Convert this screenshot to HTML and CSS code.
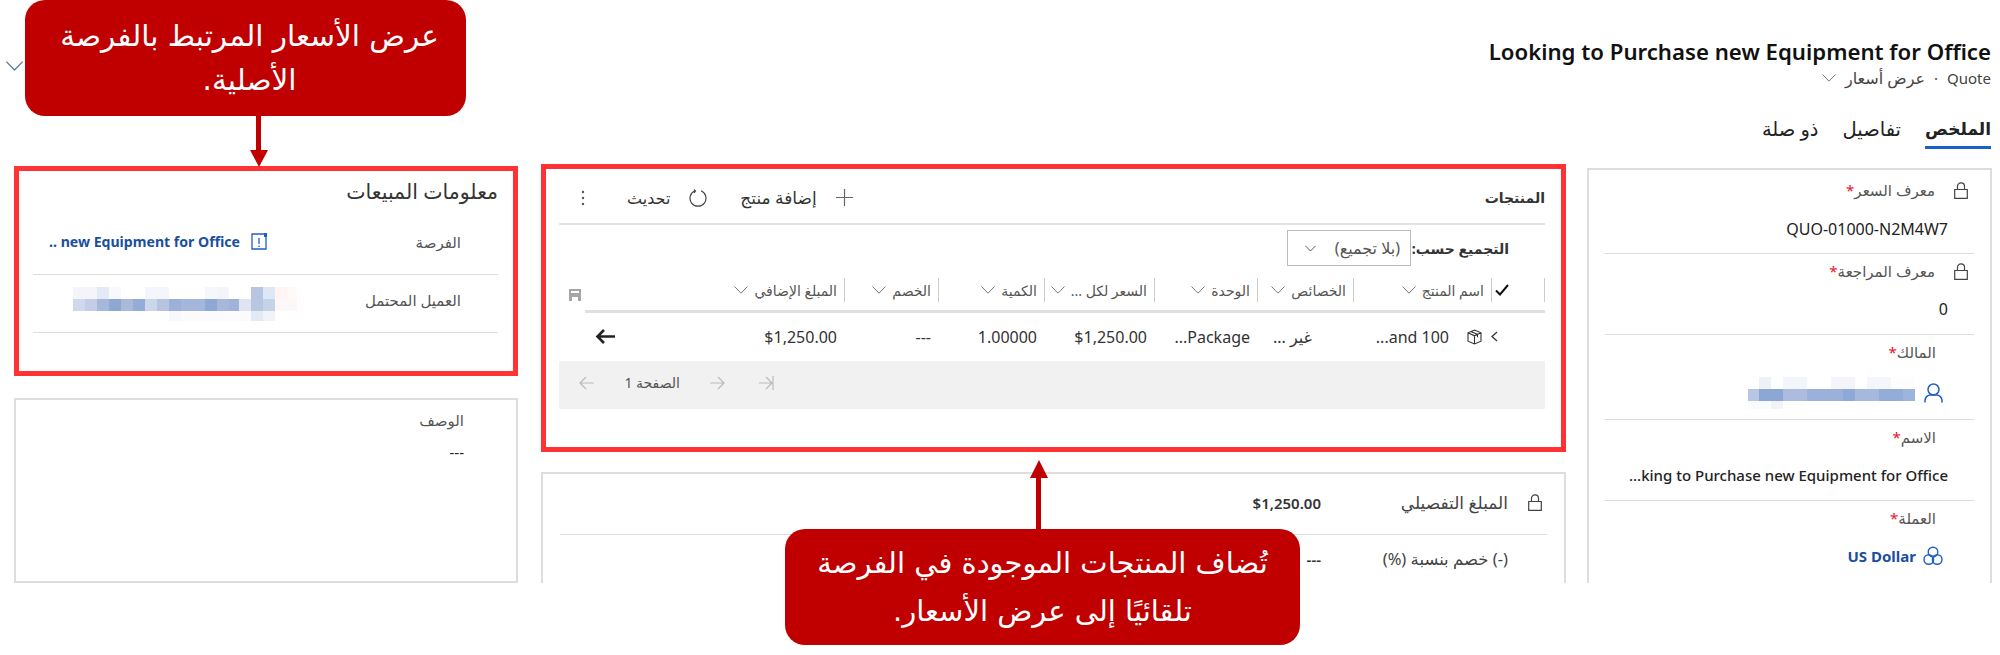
FILE: index.html
```html
<!DOCTYPE html>
<html lang="ar" dir="rtl">
<head>
  <meta charset="utf-8">
  <title>Quote</title>
  <link rel="stylesheet" href="styles.css">
</head>
<body>
  <svg width="0" height="0" class="defs">
    <symbol id="chev" viewBox="0 0 14 8"><path d="M.5.5 7 7.200 13.500.5" fill="none" stroke="currentColor"/></symbol>
    <symbol id="lock" viewBox="0 0 14 17"><path d="M.7 7.500h12.600v8.800H.7zM3.500 7.500V4.300a3.500 3.500 0 0 1 7 0v3.200" fill="none" stroke="currentColor" stroke-width="1.200"/></symbol>
  </svg>

  <div class="page">
    <button class="collapse" type="button"><svg class="ico-collapse"><use href="#chev"/></svg></button>

    <header class="head">
      <h1 class="ltr">Looking to Purchase new Equipment for Office</h1>
      <div class="sub">
        <span>Quote</span><span>·</span><span class="sub-type">عرض أسعار</span>
        <svg class="ico-chev"><use href="#chev"/></svg>
      </div>
      <nav class="tabs">
        <a class="tab active">الملخص</a>
        <a class="tab">تفاصيل</a>
        <a class="tab">ذو صلة</a>
      </nav>
    </header>

    <main class="cols">
      <!-- right column: quote fields -->
      <section class="card fields">
        <div class="field">
          <div class="label locked"><svg class="ico-lock"><use href="#lock"/></svg><span>معرف السعر<i>*</i></span></div>
          <div class="value">QUO-01000-N2M4W7</div>
        </div>
        <div class="field">
          <div class="label locked"><svg class="ico-lock"><use href="#lock"/></svg><span>معرف المراجعة<i>*</i></span></div>
          <div class="value">0</div>
        </div>
        <div class="field tall">
          <div class="label"><span>المالك<i>*</i></span></div>
          <div class="value icon-value">
            <svg class="ico-person" viewBox="0 0 19 20"><circle cx="9.500" cy="6.500" r="5.500" fill="none" stroke="#1f5fc4" stroke-width="1.500"/><path d="M1 19.500v-2c0-3 2.500-5.500 5.500-5.500h6c3 0 5.500 2.500 5.500 5.500v2" fill="none" stroke="#1f5fc4" stroke-width="1.500"/></svg>
            <span class="blur blur-owner"></span>
          </div>
        </div>
        <div class="field">
          <div class="label"><span>الاسم<i>*</i></span></div>
          <div class="value ltr name-value">...king to Purchase new Equipment for Office</div>
        </div>
        <div class="field last">
          <div class="label"><span>العملة<i>*</i></span></div>
          <div class="value icon-value link currency">
            <svg class="ico-currency" viewBox="0 0 20 20" fill="none" stroke="#1f5fc4" stroke-width="1.400"><circle cx="10" cy="6" r="4.800"/><circle cx="5.800" cy="13.500" r="4.800"/><circle cx="14.200" cy="13.500" r="4.800"/></svg>
            <span class="ltr">US Dollar</span>
          </div>
        </div>
      </section>

      <!-- middle column: products grid and totals -->
      <div class="col-mid">
        <section class="card marked products">
          <div class="toolbar">
            <span class="tb-title">المنتجات</span>
            <div class="tb-actions">
              <button class="tb-btn add" type="button">
                <svg class="ico-plus" viewBox="0 0 17 17"><path d="M8.500 0v17M0 8.500h17" stroke="#666" stroke-width="1.200"/></svg>
                <span>إضافة منتج</span>
              </button>
              <button class="tb-btn" type="button">
                <svg class="ico-refresh" viewBox="0 0 18 18" fill="none" stroke="#444" stroke-width="1.200"><path d="M6 1.800a8 8 0 1 0 6 0"/><path d="M5 .5 6.500 2 5 4"/></svg>
                <span>تحديث</span>
              </button>
              <svg class="ico-more" viewBox="0 0 4 16"><circle cx="2" cy="2" r="1.200" fill="#555"/><circle cx="2" cy="8" r="1.200" fill="#555"/><circle cx="2" cy="14" r="1.200" fill="#555"/></svg>
            </div>
          </div>

          <div class="groupby">
            <span class="gb-label">التجميع حسب:</span>
            <div class="select"><span>(بلا تجميع)</span><svg class="ico-chev dark"><use href="#chev"/></svg></div>
          </div>

          <div class="grid grid-head">
            <div class="th th-check"><svg class="ico-check" viewBox="0 0 14 12"><path d="M1 6.500 5 10.500 13 1" fill="none" stroke="#111" stroke-width="2"/></svg></div>
            <div class="th">اسم المنتج<svg class="ico-chev"><use href="#chev"/></svg></div>
            <div class="th">الخصائص<svg class="ico-chev"><use href="#chev"/></svg></div>
            <div class="th">الوحدة<svg class="ico-chev"><use href="#chev"/></svg></div>
            <div class="th">السعر لكل ...<svg class="ico-chev"><use href="#chev"/></svg></div>
            <div class="th">الكمية<svg class="ico-chev"><use href="#chev"/></svg></div>
            <div class="th">الخصم<svg class="ico-chev"><use href="#chev"/></svg></div>
            <div class="th th-last">
              المبلغ الإضافي<svg class="ico-chev"><use href="#chev"/></svg>
              <svg class="ico-save" viewBox="0 0 12 12"><path d="M0 0h12v12H9V8H3v4H0zM2 2v2h8V2z" fill="#a6a6a6" fill-rule="evenodd"/></svg>
            </div>
          </div>

          <div class="grid grid-row">
            <div class="td td-expand"><svg class="ico-expand" viewBox="0 0 7 11"><path d="M6 1 1 5.500 6 10" fill="none" stroke="#333" stroke-width="1.300"/></svg></div>
            <div class="td td-name">
              <svg class="ico-box" viewBox="0 0 15 16" fill="none" stroke="#333" stroke-width="1.100"><path d="M7.500 1 14 3.800v8.400L7.500 15 1 12.200V3.800zM1 3.800l6.500 3 6.500-3M7.500 6.800V15M4 2.400l6.500 3v2.800"/></svg>
              <span class="ltr">...and 100</span>
            </div>
            <div class="td td-pad">غير ...</div>
            <div class="td"><span class="ltr">...Package</span></div>
            <div class="td">$1,250.00</div>
            <div class="td">1.00000</div>
            <div class="td">---</div>
            <div class="td td-last">
              $1,250.00
              <svg class="ico-back" viewBox="0 0 20 15"><path d="M20 7.500H3M9 1 2.500 7.500 9 14" fill="none" stroke="#222" stroke-width="2.600"/></svg>
            </div>
          </div>

          <div class="pager">
            <svg class="ico-page first" viewBox="0 0 15 14" fill="none" stroke="#bbb" stroke-width="1.200"><path d="M14 0v14M0 7h13M7 1l6 6-6 6"/></svg>
            <svg class="ico-page" viewBox="0 0 15 14" fill="none" stroke="#bbb" stroke-width="1.200"><path d="M0 7h14M8 1l6 6-6 6"/></svg>
            <span class="page-no">الصفحة 1</span>
            <svg class="ico-page" viewBox="0 0 15 14" fill="none" stroke="#bbb" stroke-width="1.200"><path d="M15 7H1M7 1 1 7l6 6"/></svg>
          </div>
        </section>

        <section class="card totals">
          <div class="total-row">
            <svg class="ico-lock"><use href="#lock"/></svg>
            <span class="total-label">المبلغ التفصيلي</span>
            <strong class="total-value">$1,250.00</strong>
          </div>
          <div class="total-row">
            <span class="total-label no-lock">(-) خصم بنسبة (%)</span>
            <span class="total-value">---</span>
          </div>
        </section>
      </div>

      <!-- left column: sales info and description -->
      <div class="col-left">
        <section class="card marked sales">
          <h2>معلومات المبيعات</h2>
          <div class="sales-row">
            <span class="sales-label">الفرصة</span>
            <div class="sales-value link">
              <svg class="ico-opp" viewBox="0 0 16 17" fill="none" stroke="#1f5fc4" stroke-width="1.300"><path d="M13 1H1v15h14V2"/><path d="M8 5v6M8 12.500v1.500"/><path d="M13 0h3v4h-3z" fill="#1f5fc4" stroke="none"/></svg>
              <span class="ltr">.. new Equipment for Office</span>
            </div>
          </div>
          <div class="sales-row">
            <span class="sales-label short">العميل المحتمل</span>
            <div class="sales-value"><span class="blur blur-customer"></span></div>
          </div>
        </section>

        <section class="card desc">
          <div class="desc-label">الوصف</div>
          <div class="desc-value">---</div>
        </section>
      </div>
    </main>

    <div class="callout callout-top">
      عرض الأسعار المرتبط بالفرصة<br>الأصلية.
    </div>
    <div class="callout callout-bottom">
      تُضاف المنتجات الموجودة في الفرصة<br>تلقائيًا إلى عرض الأسعار.
    </div>
  </div>
</body>
</html>
```

FILE: styles.css
```css
* {
  box-sizing: border-box;
}

body {
  margin: 0;
  background-color: #fff;
  font-family: "Noto Sans", "DejaVu Sans", sans-serif;
  color: #222;
}

.defs {
  position: absolute;
}

.ltr {
  direction: ltr;
  unicode-bidi: isolate;
}

.link {
  color: #1b4f9e;
  font-weight: 700;
}

.page {
  position: relative;
  height: 655px;
}

.collapse {
  position: absolute;
  top: 61px;
  left: 5px;
  padding: 0;
  border: none;
  background: none;
  color: #5a7a96;
  line-height: 0;
}

.ico-collapse {
  width: 19px;
  height: 10px;
}

/* header */
.head {
  height: 164px;
  padding: 38px 9px 0 0;
}

h1 {
  margin: 0;
  font-size: 22.200px;
  line-height: 28px;
  font-weight: 600;
  color: #111;
  text-align: right;
}

.sub {
  display: flex;
  align-items: center;
  gap: 9px;
  height: 24px;
  font-size: 15px;
  color: #444;
}

.sub-type {
  font-size: 16px;
}

.ico-chev {
  flex: none;
  width: 14px;
  height: 8px;
  color: #777;
}

.ico-chev.dark {
  width: 11px;
  height: 7px;
  color: #333;
}

.tabs {
  display: flex;
  gap: 24px;
  margin-top: 25px;
}

.tab {
  height: 34px;
  font-size: 19.500px;
  line-height: 28px;
  color: #222;
}

.tab.active {
  border-bottom: 3px solid #1a5fd0;
  font-size: 17px;
  font-weight: 600;
}

/* columns */
.cols {
  display: flex;
  align-items: flex-start;
  height: 419px;
  overflow: hidden;
}

.card {
  border: 2px solid #ddd;
  background-color: #fff;
}

.card.marked {
  border: 5px solid #ff3333;
}

.fields {
  flex: none;
  width: 405px;
  height: 430px;
  margin: 4px 8px 0 21px;
  padding: 0 16px;
}

.field {
  height: 81px;
  border-bottom: 1px solid #ddd;
}

.field:first-child {
  height: 84px;
}

.field.tall {
  height: 85px;
}

.field.last {
  border-bottom: none;
}

.label {
  display: flex;
  align-items: center;
  gap: 19px;
  height: 34px;
  padding-right: 38px;
  font-size: 15px;
  color: #555;
}

.label.locked {
  padding-right: 6px;
}

.field:first-child .label {
  padding-top: 3px;
  height: 37px;
}

.label i {
  font-style: normal;
  color: #e8112d;
}

.ico-lock {
  flex: none;
  width: 14px;
  height: 17px;
  color: #444;
}

.value {
  margin-top: 9px;
  padding-right: 26px;
  font-size: 16px;
  line-height: 24px;
  color: #222;
}

.field:first-child .value {
  margin-top: 10px;
}

.name-value {
  font-size: 15px;
  font-weight: 500;
  text-align: right;
  white-space: nowrap;
}

.icon-value {
  display: flex;
  align-items: center;
  gap: 9px;
  padding-right: 31px;
}

.field.tall .value {
  margin-top: 8px;
}

.currency {
  gap: 7px;
  font-size: 15px;
  color: #1b4f9e;
}

.ico-person {
  flex: none;
  width: 19px;
  height: 20px;
}

.ico-currency {
  flex: none;
  width: 20px;
  height: 20px;
}

.blur {
  display: block;
  background-repeat: no-repeat;
}

.blur-owner {
  width: 167px;
  height: 32px;
  background-image:
    linear-gradient(to left, #fdfdfe 0 24px, #f4f6fb 0 48px, #fff 0 60px, #f3f5fa 0 84px, #fff 0 108px, #f2f5fa 0 132px, #fff 0 144px, #eef1f8 0 156px, #fff 0),
    linear-gradient(to left, #9fb4dc 0 12px, #94acd8 0 36px, #a6b8dc 0 60px, #8fa9d6 0 72px, #9cb1da 0 108px, #adbcde 0 132px, #8da7d5 0 156px, #b9c6e3 0),
    linear-gradient(to left, #fff 0 132px, #f1f3f9 0 144px, #fafbfd 0);
  background-size: 100% 12px;
  background-position: 0 0, 0 12px, 0 24px;
}

.blur-customer {
  width: 224px;
  height: 34px;
  background-image:
    linear-gradient(to right, #f3f5fb 0 24px, #e3e9f5 0 36px, #f8f9fc 0 48px, #fff 0 72px, #f4f6fb 0 96px, #fff 0 132px, #f6f7fb 0 144px, #f3f5fa 0 156px, #fff 0 178px, #b7c5e2 0 190px, #dfe6f4 0 202px, #fff4f2 0 214px, #fff9f8 0),
    linear-gradient(to right, #d0d8ec 0 12px, #c4cde6 0 24px, #a6b8da 0 36px, #8ea8d4 0 48px, #aab8da 0 60px, #94add8 0 72px, #ccd6ea 0 84px, #b6c4e0 0 96px, #9cb0da 0 108px, #a4b6dc 0 132px, #8ea8d6 0 144px, #a8b6da 0 156px, #a0b2da 0 166px, #e0e4f0 0 178px, #b8c6e2 0 190px, #c4d2ea 0 202px, #fdf8f8 0),
    linear-gradient(to right, #fff 0 96px, #f7f8fc 0 108px, #fcfcfe 0 166px, #fafbfd 0 178px, #e3e9f5 0 190px, #f0f4f9 0 202px, #fff 0);
  background-size: 100% 12px;
  background-position: 0 0, 0 12px, 0 24px;
}

.col-mid {
  flex: none;
  width: 1025px;
  margin-left: 23px;
}

.products {
  height: 288px;
  padding: 0 16px 0 0;
}

.toolbar {
  display: flex;
  align-items: center;
  justify-content: space-between;
  height: 56px;
  margin-left: 13px;
  padding-top: 3px;
  border-bottom: 2px solid #e2e2e2;
}

.tb-title {
  font-size: 14px;
  font-weight: 600;
  color: #333;
}

.tb-actions {
  display: flex;
  align-items: center;
  gap: 33px;
  padding-left: 22px;
}

.tb-btn {
  display: flex;
  align-items: center;
  gap: 19px;
  padding: 0;
  border: none;
  background: none;
  font: inherit;
  font-size: 16px;
  color: #333;
}

.tb-btn.add {
  font-size: 17px;
}

.ico-plus {
  width: 17px;
  height: 17px;
}

.ico-refresh {
  width: 18px;
  height: 18px;
}

.ico-more {
  width: 4px;
  height: 16px;
  margin-right: 9px;
}

.groupby {
  display: flex;
  align-items: center;
  height: 36px;
  margin-top: 5px;
  padding-right: 36px;
}

.gb-label {
  width: 98px;
  font-size: 14px;
  font-weight: 700;
  color: #333;
  white-space: nowrap;
}

.select {
  display: flex;
  align-items: center;
  justify-content: space-between;
  width: 124px;
  height: 36px;
  padding: 0 10px 0 17px;
  border: 1px solid #bbb;
  font-size: 16px;
  color: #555;
  white-space: nowrap;
}

.grid {
  display: grid;
  grid-template-columns: 54px 138px 96px 103px 110px 106px 94px 1fr;
  margin-left: 39px;
}

.grid-head {
  height: 35px;
  margin-top: 12px;
  border-bottom: 3px solid #e0e0e0;
  align-items: start;
}

.th {
  display: flex;
  align-items: center;
  gap: 6px;
  height: 24px;
  padding-right: 7px;
  border-left: 1px solid #ccc;
  font-size: 14px;
  color: #555;
  white-space: nowrap;
}

.th-check {
  border-right: 1px solid #ccc;
  padding-right: 35px;
}

.th-last {
  border-left: none;
}

.ico-check {
  flex: none;
  width: 14px;
  height: 12px;
}

.ico-save {
  flex: none;
  width: 12px;
  height: 12px;
  margin: 10px auto 0 -16px;
}

.grid-row {
  align-items: center;
  height: 47px;
}

.td {
  padding-right: 7px;
  font-size: 16px;
  color: #333;
  white-space: nowrap;
}

.td-expand {
  display: flex;
  justify-content: flex-end;
}

.ico-expand {
  flex: none;
  width: 7px;
  height: 11px;
}

.td-name {
  display: flex;
  align-items: center;
  gap: 18px;
  padding-right: 9px;
}

.ico-box {
  flex: none;
  width: 15px;
  height: 16px;
}

.td-pad {
  padding-right: 41px;
}

.td-last {
  display: flex;
  align-items: center;
  justify-content: space-between;
  padding-left: 10px;
}

.ico-back {
  flex: none;
  width: 20px;
  height: 15px;
}

.pager {
  display: flex;
  align-items: center;
  gap: 30px;
  height: 48px;
  margin: 1px 0 0 13px;
  padding: 0 771px 5px 0;
  background-color: #f1f1f1;
  font-size: 14px;
  color: #555;
}

.ico-page {
  flex: none;
  width: 15px;
  height: 14px;
}

.ico-page.first {
  margin-left: 4px;
}

.page-no {
  white-space: nowrap;
}

.totals {
  height: 120px;
  margin-top: 20px;
  padding: 0 17px;
}

.total-row {
  display: flex;
  align-items: center;
  height: 61px;
  padding: 0 5px 3px 0;
  border-bottom: 1px solid #ddd;
  font-size: 17px;
}

.total-row + .total-row {
  height: 50px;
  border-bottom: none;
  font-size: 16.500px;
}

.total-label {
  width: 187px;
  margin-right: 20px;
  color: #444;
  white-space: nowrap;
}

.total-label.no-lock {
  margin-right: 34px;
}

.total-value {
  font-size: 15px;
  font-weight: 600;
  color: #333;
}

.col-left {
  flex: none;
  width: 504px;
  margin-top: 2px;
}

.sales {
  height: 210px;
  padding: 0 15px 0 14px;
}

h2 {
  margin: 0;
  padding-top: 4px;
  height: 46px;
  font-size: 20.500px;
  line-height: 32px;
  font-weight: 400;
  color: #333;
}

.sales-row {
  display: flex;
  align-items: center;
  height: 58px;
  padding: 0 37px 8px 0;
  border-bottom: 1px solid #ddd;
}

.sales-row + .sales-row {
  padding-bottom: 0;
}

.sales-row + .sales-row .sales-label {
  padding-bottom: 8px;
}

.sales-label {
  width: 194px;
  font-size: 15px;
  color: #555;
  white-space: nowrap;
}

.sales-label.short {
  width: 164px;
}

.sales-value {
  display: flex;
  align-items: center;
  gap: 11px;
  font-size: 14.100px;
  white-space: nowrap;
}

.ico-opp {
  flex: none;
  width: 16px;
  height: 17px;
}

.desc {
  height: 185px;
  margin-top: 22px;
  padding-top: 10px;
  font-size: 15px;
  line-height: 20px;
}

.desc-label {
  padding-right: 52px;
  color: #555;
}

.desc-value {
  margin-top: 12px;
  padding-right: 52px;
}

/* callouts on top of the form */
.callout {
  position: absolute;
  display: flex;
  align-items: center;
  justify-content: center;
  text-align: center;
  background-color: #c00000;
  border-radius: 20px;
  color: #fff;
  font-family: "DejaVu Sans", sans-serif;
  font-size: 29.500px;
  line-height: 44px;
}

.callout::before {
  content: "";
  position: absolute;
  width: 5px;
  background-color: #c00000;
}

.callout::after {
  content: "";
  position: absolute;
  border-right: 9px solid transparent;
  border-left: 9px solid transparent;
}

.callout-top {
  top: 0;
  left: 25px;
  width: 441px;
  height: 116px;
  padding-left: 8px;
}

.callout-top::before {
  top: 116px;
  left: 231px;
  height: 38px;
}

.callout-top::after {
  top: 150px;
  left: 225px;
  border-top: 17px solid #c00000;
}

.callout-bottom {
  top: 529px;
  left: 785px;
  width: 515px;
  height: 116px;
  font-size: 29px;
  line-height: 48px;
}

.callout-bottom::before {
  top: -54px;
  left: 251px;
  height: 54px;
}

.callout-bottom::after {
  top: -69px;
  left: 245px;
  border-bottom: 18px solid #c00000;
}
```
